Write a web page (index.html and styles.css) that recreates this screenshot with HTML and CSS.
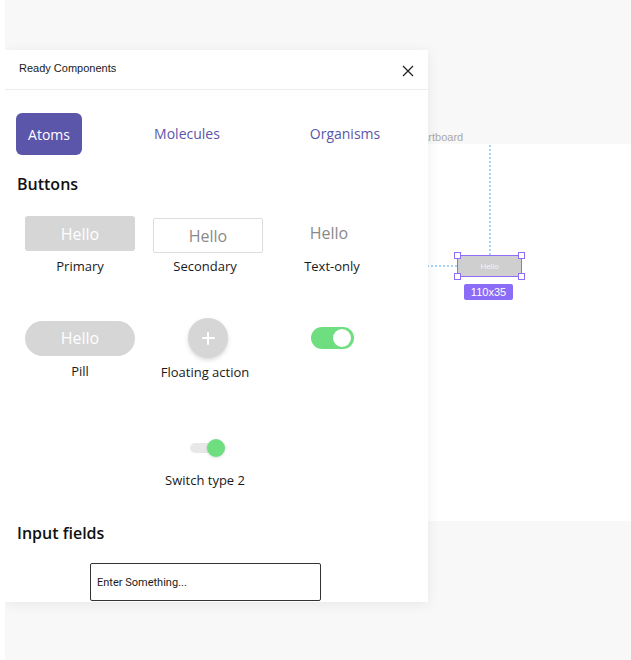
FILE: index.html
```html
<!DOCTYPE html>
<html>
<head>
<meta charset="utf-8">
<link rel="stylesheet" href="styles.css">
</head>
<body>
<div class="canvas">
  <div class="artboard">
    <div class="artboard-label">Artboard</div>
    <div class="guide-v"></div>
    <div class="guide-h"></div>
    <div class="selection">
      <span class="sel-text">Hello</span>
      <i class="handle h-tl"></i><i class="handle h-tr"></i><i class="handle h-bl"></i><i class="handle h-br"></i>
    </div>
    <div class="size-badge">110x35</div>
  </div>

  <div class="panel">
    <div class="panel-header">
      <span class="panel-title">Ready Components</span>
      <svg class="close" width="12" height="12" viewBox="0 0 12 12"><path d="M1 1L11 11M11 1L1 11" stroke="#222" stroke-width="1.3" fill="none"/></svg>
    </div>

    <div class="tabs">
      <div class="tab tab-active">Atoms</div>
      <div class="tab">Molecules</div>
      <div class="tab">Organisms</div>
    </div>

    <h2 class="section-title">Buttons</h2>

    <div class="atoms-grid">
      <div class="cell">
        <div class="area area-r1"><div class="btn btn-primary">Hello</div></div>
        <div class="label">Primary</div>
      </div>
      <div class="cell">
        <div class="area area-r1"><div class="btn btn-secondary">Hello</div></div>
        <div class="label">Secondary</div>
      </div>
      <div class="cell">
        <div class="area area-r1"><div class="btn btn-text">Hello</div></div>
        <div class="label">Text-only</div>
      </div>

      <div class="cell">
        <div class="area area-r2"><div class="btn btn-pill">Hello</div></div>
        <div class="label">Pill</div>
      </div>
      <div class="cell">
        <div class="area area-r2"><div class="fab"><span class="fab-h"></span><span class="fab-v"></span></div></div>
        <div class="label label-fab">Floating action</div>
      </div>
      <div class="cell">
        <div class="area area-r2"><div class="toggle"><span class="toggle-knob"></span></div></div>
      </div>

      <div class="cell cell-switch2">
        <div class="area area-r3"><div class="switch2"><span class="switch2-knob"></span></div></div>
        <div class="label label-switch2">Switch type 2</div>
      </div>
    </div>

    <h2 class="section-title section-inputs">Input fields</h2>
    <div class="input-row">
      <div class="input-box">Enter Something...</div>
    </div>
  </div>
</div>
</body>
</html>
```

FILE: styles.css
```css
html, body {
  margin: 0;
  padding: 0;
  background: #ffffff;
  overflow: hidden;
}

.canvas {
  margin-left: 5px;
  height: 660px;
  background: #f8f8f8;
  position: relative;
  padding-top: 50px;
  box-sizing: border-box;
  overflow: hidden;
}

/* Artboard on the canvas */
.artboard {
  position: absolute;
  left: 413px;
  top: 144px;
  width: 240px;
  height: 377px;
  background: #ffffff;
}

.artboard-label {
  position: absolute;
  left: 3px;
  top: -13px;
  font-family: "Liberation Sans", Arial, sans-serif;
  font-size: 11px;
  line-height: 12px;
  color: #a9a9a9;
}

.guide-v {
  position: absolute;
  left: 71px;
  top: 1px;
  height: 110px;
  border-left: 2px dotted #a8d4f7;
}

.guide-h {
  position: absolute;
  left: 0;
  top: 121px;
  width: 39px;
  border-top: 2px dotted #a8d4f7;
}

.selection {
  position: absolute;
  left: 39px;
  top: 111px;
  width: 63px;
  height: 20px;
  background: #cfcfcf;
  border: 1px solid #8c6ff6;
  display: flex;
  align-items: center;
  justify-content: center;
}

.sel-text {
  font-family: "Liberation Sans", Arial, sans-serif;
  font-size: 8px;
  color: #f4f4f4;
}

.handle {
  position: absolute;
  width: 5px;
  height: 5px;
  background: #ffffff;
  border: 1px solid #8c6ff6;
}
.h-tl { left: -4px; top: -4px; }
.h-tr { right: -4px; top: -4px; }
.h-bl { left: -4px; bottom: -4px; }
.h-br { right: -4px; bottom: -4px; }

.size-badge {
  position: absolute;
  left: 46px;
  top: 140px;
  width: 49px;
  height: 16px;
  background: #8b6cf6;
  border-radius: 2px;
  color: #ffffff;
  font-family: "Liberation Sans", Arial, sans-serif;
  font-size: 11px;
  line-height: 16px;
  text-align: center;
}

/* Panel */
.panel {
  position: relative;
  z-index: 2;
  width: 423px;
  height: 552px;
  background: #ffffff;
  box-shadow: 0 2px 12px rgba(0, 0, 0, 0.07);
  overflow: hidden;
  font-family: "Open Sans", "Noto Sans", sans-serif;
}

.panel-header {
  height: 39px;
  border-bottom: 1px solid #ececec;
  display: flex;
  align-items: center;
  justify-content: space-between;
  padding: 0 14px 0 14px;
}

.panel-title {
  font-family: "Liberation Sans", Arial, sans-serif;
  font-size: 11px;
  color: #1a1a1a;
  margin-top: -4px;
}

.close {
  margin-top: 2px;
}

.tabs {
  display: grid;
  grid-template-columns: 66px 106px 106px;
  column-gap: 52px;
  margin: 23px 0 0 11px;
}

.tab {
  height: 42px;
  display: flex;
  align-items: center;
  justify-content: center;
  font-size: 14px;
  color: #5c56ab;
  padding-bottom: 2px;
  box-sizing: border-box;
}

.tab-active {
  background: #5c56ab;
  color: #ffffff;
  border-radius: 6px;
  height: 42px;
  align-items: flex-end;
  padding-bottom: 11px;
}

.section-title {
  margin: 18px 0 0 12px;
  font-size: 16px;
  font-weight: 600;
  line-height: 22px;
  color: #111111;
}

.atoms-grid {
  display: grid;
  grid-template-columns: 128px 122px 132px;
  row-gap: 43px;
  margin: 21px 0 0 11px;
}

.cell {
  display: flex;
  flex-direction: column;
  align-items: center;
}

.area {
  display: flex;
  justify-content: center;
  width: 100%;
}

.area-r1 {
  height: 37px;
  align-items: flex-start;
}

.area-r2 {
  height: 40px;
  align-items: center;
}

.area-r3 {
  height: 18px;
  align-items: center;
  margin-top: 15px;
}

.label {
  margin-top: 4px;
  font-size: 13px;
  line-height: 18px;
  color: #1a1a1a;
}

.label-fab {
  margin-top: 5px;
}

.label-switch2 {
  margin-top: 14px;
}

.cell-switch2 {
  grid-column: 2;
}

.btn {
  width: 110px;
  height: 35px;
  box-sizing: border-box;
  display: flex;
  align-items: center;
  justify-content: center;
  font-size: 16px;
  flex-shrink: 0;
}

.btn-primary {
  background: #d6d6d6;
  color: #ffffff;
  border-radius: 3px;
}

.btn-secondary {
  margin-top: 2px;
  margin-left: 6px;
  background: #ffffff;
  border: 1px solid #dddddd;
  border-radius: 2px;
  color: #8a8a8a;
}

.btn-text {
  color: #8a8a8a;
  margin-left: -6px;
  padding-bottom: 1px;
}

.btn-pill {
  background: #d6d6d6;
  color: #ffffff;
  border-radius: 18px;
}

.fab {
  position: relative;
  width: 40px;
  height: 40px;
  border-radius: 50%;
  background: #d6d6d6;
  box-shadow: 0 2px 4px rgba(0, 0, 0, 0.14);
  margin-left: 5px;
}

.fab-h, .fab-v {
  position: absolute;
  background: #ffffff;
  border-radius: 1px;
}
.fab-h { left: 14px; top: 19px; width: 13px; height: 2px; }
.fab-v { left: 19px; top: 14px; width: 2px; height: 13px; }

.toggle {
  position: relative;
  width: 43px;
  height: 22px;
  border-radius: 11px;
  background: #6ede80;
  margin-left: 1px;
}

.toggle-knob {
  position: absolute;
  right: 3px;
  top: 2px;
  width: 18px;
  height: 18px;
  border-radius: 50%;
  background: #ffffff;
}

.switch2 {
  position: relative;
  width: 35px;
  height: 10px;
  border-radius: 5px;
  background: #e8e8e8;
  margin-left: 5px;
}

.switch2-knob {
  position: absolute;
  right: 0;
  top: -4px;
  width: 18px;
  height: 18px;
  border-radius: 50%;
  background: #6ede80;
  box-shadow: 0 1px 3px rgba(0, 0, 0, 0.15);
}

.section-inputs {
  margin-top: 33px;
}

.input-row {
  margin: 19px 0 0 85px;
}

.input-box {
  width: 231px;
  height: 38px;
  box-sizing: border-box;
  border: 1px solid #333333;
  border-radius: 2px;
  padding-left: 6px;
  display: flex;
  align-items: center;
  font-family: Roboto, "Liberation Sans", sans-serif;
  font-size: 11px;
  color: #1a1a1a;
}
```
